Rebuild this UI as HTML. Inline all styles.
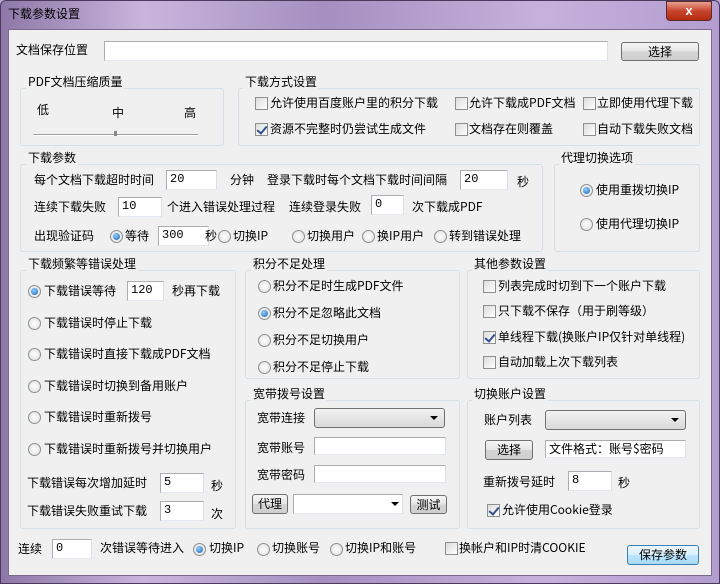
<!DOCTYPE html>
<html><head><meta charset="utf-8"><style>
*{box-sizing:border-box;margin:0;padding:0}
body{width:720px;height:584px;overflow:hidden;background:#b9a7cf;font-family:"Noto Sans CJK SC","WenQuanYi Zen Hei",sans-serif;font-size:12px;color:#000;position:relative}
.frame{position:absolute;left:0;top:0;width:720px;height:584px;background:linear-gradient(90deg,#8d78a8 0,#c9b5dc 20%,#a48fc0 45%,#c6b1dc 75%,#b39dd0 100%);border:1px solid #4a3a60;border-radius:6px 6px 0 0}
.client{position:absolute;left:8px;top:29px;width:704px;height:547px;background:#f0f0f0;border:1px solid #7a6a90}
.a{position:absolute;white-space:nowrap;line-height:14px}
.g{position:absolute;border:1px solid #d5dfe5;border-radius:3px}
.gl{position:absolute;background:#f0f0f0;padding:0 2px;line-height:14px;white-space:nowrap}
.i{position:absolute;background:#fff;border:1px solid #abadb3;border-bottom-color:#e3e9ef;border-right-color:#dbdfe6;padding:1px 3px;line-height:15px;font-family:"Liberation Mono",monospace;font-size:12px}
.b{position:absolute;background:linear-gradient(#f6f6f6,#e4e4e4 50%,#d4d4d4 51%,#cfcfcf);border:1px solid #707070;border-radius:3px;text-align:center;line-height:17px}
.c{position:absolute;width:13px;height:13px;border:1px solid #8e8f8f;background:linear-gradient(135deg,#dcdcdc,#fff);}
.c.k::after{content:"";position:absolute;left:3px;top:0px;width:4px;height:8px;border:solid #31518f;border-width:0 2px 2px 0;transform:rotate(40deg)}
.r{position:absolute;width:13px;height:13px;border:1px solid #8e8f8f;border-radius:50%;background:radial-gradient(circle,#fff,#dcdcdc)}
.r.k::after{content:"";position:absolute;left:2px;top:2px;width:7px;height:7px;border-radius:50%;background:radial-gradient(circle at 40% 35%,#8fd0ff,#1c5fb0)}
.cmb{position:absolute;background:linear-gradient(#f2f2f2,#d9d9d9);border:1px solid #707070;border-radius:3px}
.cmb::after{content:"";position:absolute;right:6px;top:7px;border:4px solid transparent;border-top:4px solid #000;border-bottom:0}
</style></head><body>
<div class="frame"></div>
<div class="a" style="left:8px;top:7px">下载参数设置</div>
<div style="position:absolute;left:666px;top:1px;width:46px;height:20px;background:linear-gradient(#e8a08f,#c7452d 50%,#b52a10);border:1px solid #5a2a2a;border-radius:0 0 4px 4px;color:#fff;text-align:center;font-weight:bold;font-family:'Liberation Sans';font-size:13px;line-height:18px">x</div>
<div class="client"></div>

<div class="a" style="left:16px;top:43px">文档保存位置</div>
<div class="i" style="left:104px;top:41px;width:504px;height:20px"></div>
<div class="b" style="left:621px;top:42px;width:78px;height:19px">选择</div>

<div class="g" style="left:20px;top:88px;width:204px;height:58px"></div>
<div class="gl" style="left:26px;top:75px">PDF文档压缩质量</div>
<div class="a" style="left:37px;top:103px">低</div>
<div class="a" style="left:112px;top:106px">中</div>
<div class="a" style="left:184px;top:106px">高</div>
<div style="position:absolute;left:33px;top:134px;width:165px;height:2px;border-top:1px solid #a0a0a0;border-bottom:1px solid #fff"></div>
<div style="position:absolute;left:114px;top:131px;width:3px;height:5px;background:#888"></div>

<div class="g" style="left:238px;top:88px;width:462px;height:58px"></div>
<div class="gl" style="left:243px;top:75px">下载方式设置</div>
<div class="c" style="left:255px;top:97px"></div><div class="a" style="left:270px;top:96px">允许使用百度账户里的积分下载</div>
<div class="c" style="left:455px;top:97px"></div><div class="a" style="left:469px;top:96px">允许下载成PDF文档</div>
<div class="c" style="left:583px;top:97px"></div><div class="a" style="left:597px;top:96px">立即使用代理下载</div>
<div class="c k" style="left:255px;top:123px"></div><div class="a" style="left:270px;top:122px">资源不完整时仍尝试生成文件</div>
<div class="c" style="left:455px;top:123px"></div><div class="a" style="left:469px;top:122px">文档存在则覆盖</div>
<div class="c" style="left:583px;top:123px"></div><div class="a" style="left:597px;top:122px">自动下载失败文档</div>

<div class="g" style="left:20px;top:164px;width:523px;height:88px"></div>
<div class="gl" style="left:26px;top:151px">下载参数</div>
<div class="a" style="left:34px;top:173px">每个文档下载超时时间</div>
<div class="i" style="left:166px;top:170px;width:51px;height:20px">20</div>
<div class="a" style="left:230px;top:173px">分钟</div>
<div class="a" style="left:267px;top:173px">登录下载时每个文档下载时间间隔</div>
<div class="i" style="left:460px;top:170px;width:48px;height:20px">20</div>
<div class="a" style="left:517px;top:175px">秒</div>
<div class="a" style="left:34px;top:200px">连续下载失败</div>
<div class="i" style="left:118px;top:197px;width:44px;height:20px">10</div>
<div class="a" style="left:167px;top:200px">个进入错误处理过程</div>
<div class="a" style="left:289px;top:200px">连续登录失败</div>
<div class="i" style="left:371px;top:195px;width:33px;height:20px">0</div>
<div class="a" style="left:412px;top:200px">次下载成PDF</div>
<div class="a" style="left:34px;top:229px">出现验证码</div>
<div class="r k" style="left:110px;top:230px"></div><div class="a" style="left:125px;top:229px">等待</div>
<div class="i" style="left:158px;top:226px;width:51px;height:20px">300</div>
<div class="a" style="left:205px;top:229px">秒</div>
<div class="r" style="left:218px;top:230px"></div><div class="a" style="left:233px;top:229px">切换IP</div>
<div class="r" style="left:292px;top:230px"></div><div class="a" style="left:307px;top:229px">切换用户</div>
<div class="r" style="left:362px;top:230px"></div><div class="a" style="left:377px;top:229px">换IP用户</div>
<div class="r" style="left:434px;top:230px"></div><div class="a" style="left:449px;top:229px">转到错误处理</div>

<div class="g" style="left:554px;top:164px;width:146px;height:88px"></div>
<div class="gl" style="left:559px;top:151px">代理切换选项</div>
<div class="r k" style="left:580px;top:184px"></div><div class="a" style="left:596px;top:183px">使用重拨切换IP</div>
<div class="r" style="left:580px;top:218px"></div><div class="a" style="left:596px;top:217px">使用代理切换IP</div>

<div class="g" style="left:20px;top:270px;width:216px;height:259px"></div>
<div class="gl" style="left:26px;top:257px">下载频繁等错误处理</div>
<div class="r k" style="left:28px;top:285px"></div><div class="a" style="left:44px;top:284px">下载错误等待</div>
<div class="i" style="left:127px;top:281px;width:37px;height:20px">120</div>
<div class="a" style="left:172px;top:284px">秒再下载</div>
<div class="r" style="left:28px;top:317px"></div><div class="a" style="left:44px;top:316px">下载错误时停止下载</div>
<div class="r" style="left:28px;top:348px"></div><div class="a" style="left:44px;top:347px">下载错误时直接下载成PDF文档</div>
<div class="r" style="left:28px;top:380px"></div><div class="a" style="left:44px;top:379px">下载错误时切换到备用账户</div>
<div class="r" style="left:28px;top:411px"></div><div class="a" style="left:44px;top:410px">下载错误时重新拨号</div>
<div class="r" style="left:28px;top:443px"></div><div class="a" style="left:44px;top:442px">下载错误时重新拨号并切换用户</div>
<div class="a" style="left:27px;top:476px">下载错误每次增加延时</div>
<div class="i" style="left:160px;top:473px;width:44px;height:20px">5</div>
<div class="a" style="left:211px;top:479px">秒</div>
<div class="a" style="left:27px;top:504px">下载错误失败重试下载</div>
<div class="i" style="left:160px;top:501px;width:44px;height:20px">3</div>
<div class="a" style="left:211px;top:507px">次</div>

<div class="g" style="left:245px;top:270px;width:215px;height:109px"></div>
<div class="gl" style="left:251px;top:257px">积分不足处理</div>
<div class="r" style="left:258px;top:280px"></div><div class="a" style="left:273px;top:279px">积分不足时生成PDF文件</div>
<div class="r k" style="left:258px;top:307px"></div><div class="a" style="left:273px;top:306px">积分不足忽略此文档</div>
<div class="r" style="left:258px;top:334px"></div><div class="a" style="left:273px;top:333px">积分不足切换用户</div>
<div class="r" style="left:258px;top:361px"></div><div class="a" style="left:273px;top:360px">积分不足停止下载</div>

<div class="g" style="left:245px;top:400px;width:215px;height:129px"></div>
<div class="gl" style="left:251px;top:387px">宽带拨号设置</div>
<div class="a" style="left:257px;top:411px">宽带连接</div>
<div class="cmb" style="left:314px;top:408px;width:131px;height:20px"></div>
<div class="a" style="left:257px;top:441px">宽带账号</div>
<div class="i" style="left:314px;top:437px;width:132px;height:18px"></div>
<div class="a" style="left:257px;top:468px">宽带密码</div>
<div class="i" style="left:314px;top:465px;width:132px;height:18px"></div>
<div class="b" style="left:252px;top:494px;width:36px;height:20px">代理</div>
<div class="i" style="left:293px;top:494px;width:110px;height:20px"></div>
<div style="position:absolute;left:391px;top:502px;border:4px solid transparent;border-top:4px solid #000;border-bottom:0"></div>
<div class="b" style="left:410px;top:495px;width:37px;height:19px">测试</div>

<div class="g" style="left:467px;top:270px;width:233px;height:109px"></div>
<div class="gl" style="left:472px;top:257px">其他参数设置</div>
<div class="c" style="left:483px;top:280px"></div><div class="a" style="left:498px;top:279px">列表完成时切到下一个账户下载</div>
<div class="c" style="left:483px;top:305px"></div><div class="a" style="left:498px;top:304px">只下载不保存（用于刷等级）</div>
<div class="c k" style="left:483px;top:331px"></div><div class="a" style="left:498px;top:330px">单线程下载(换账户IP仅针对单线程)</div>
<div class="c" style="left:483px;top:356px"></div><div class="a" style="left:498px;top:355px">自动加载上次下载列表</div>

<div class="g" style="left:467px;top:400px;width:233px;height:129px"></div>
<div class="gl" style="left:472px;top:387px">切换账户设置</div>
<div class="a" style="left:484px;top:413px">账户列表</div>
<div class="cmb" style="left:545px;top:410px;width:141px;height:20px"></div>
<div class="b" style="left:485px;top:440px;width:48px;height:20px">选择</div>
<div class="i" style="left:545px;top:440px;width:141px;height:18px;font-family:'Noto Sans CJK SC',sans-serif;line-height:14px">文件格式：账号$密码</div>
<div class="a" style="left:483px;top:475px">重新拨号延时</div>
<div class="i" style="left:568px;top:471px;width:44px;height:20px">8</div>
<div class="a" style="left:618px;top:476px">秒</div>
<div class="c k" style="left:487px;top:504px"></div><div class="a" style="left:502px;top:503px">允许使用Cookie登录</div>

<div class="a" style="left:18px;top:542px">连续</div>
<div class="i" style="left:52px;top:539px;width:40px;height:20px">0</div>
<div class="a" style="left:100px;top:541px">次错误等待进入</div>
<div class="r k" style="left:193px;top:543px"></div><div class="a" style="left:209px;top:541px">切换IP</div>
<div class="r" style="left:257px;top:543px"></div><div class="a" style="left:272px;top:541px">切换账号</div>
<div class="r" style="left:330px;top:543px"></div><div class="a" style="left:345px;top:541px">切换IP和账号</div>
<div class="c" style="left:445px;top:542px"></div><div class="a" style="left:459px;top:541px">换帐户和IP时清COOKIE</div>
<div class="b" style="left:627px;top:545px;width:72px;height:20px;border-color:#3c7fb1;background:linear-gradient(#eaf6fd,#d9f0fc 50%,#bee6fd 51%,#a7d9f5)">保存参数</div>
</body></html>
